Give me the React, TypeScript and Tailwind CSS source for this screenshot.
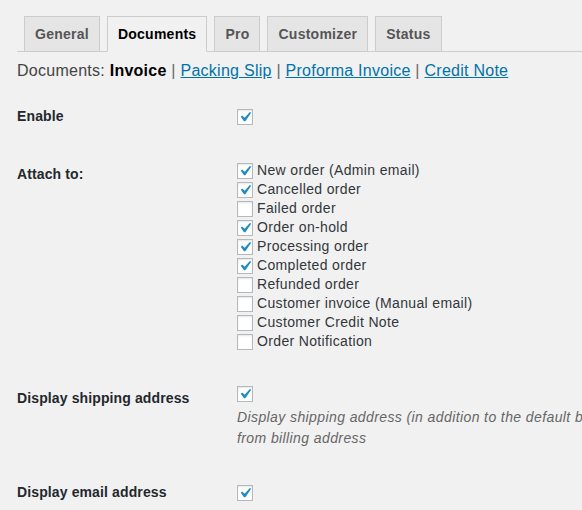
import type { ReactNode } from "react";

const tabs = ["General", "Documents", "Pro", "Customizer", "Status"];

const attachTo = [
  { label: "New order (Admin email)", checked: true },
  { label: "Cancelled order", checked: true },
  { label: "Failed order", checked: false },
  { label: "Order on-hold", checked: true },
  { label: "Processing order", checked: true },
  { label: "Completed order", checked: true },
  { label: "Refunded order", checked: false },
  { label: "Customer invoice (Manual email)", checked: false },
  { label: "Customer Credit Note", checked: false },
  { label: "Order Notification", checked: false },
];

function Checkbox({ checked }: { checked: boolean }) {
  return (
    <span className="relative block h-4 w-4 shrink-0 border border-[#b4b9be] bg-white shadow-[inset_0_1px_2px_rgba(0,0,0,0.1)]">
      {checked && (
        <svg
          viewBox="0 0 20 20"
          className="absolute left-[-3px] top-[-3px] h-5 w-5"
          fill="#1e8cbe"
        >
          <path d="M14.83 4.89l1.34.94-5.81 8.38H9.02L5.78 9.67l1.34-1.25 2.57 2.4z" />
        </svg>
      )}
    </span>
  );
}

function Row({
  label,
  thPad,
  tdPad,
  children,
}: {
  label: string;
  thPad: string;
  tdPad: string;
  children: ReactNode;
}) {
  return (
    <div className="flex">
      <div className={`w-[220px] shrink-0 text-[14px] font-bold leading-[18px] tracking-[0.12px] text-[#23282d] ${thPad}`}>
        {label}
      </div>
      <div className={tdPad}>{children}</div>
    </div>
  );
}

export default function App() {
  return (
    <div
      className="h-[510px] w-[582px] overflow-hidden bg-[#f1f1f1] pl-[17px] text-[#32373c]"
      style={{ fontFamily: '"Liberation Sans", Arial, sans-serif' }}
    >
      <div className="flex w-[600px] border-b border-[#ccc] pt-4">
        {tabs.map((t) => {
          const active = t === "Documents";
          return (
            <div
              key={t}
              className={`ml-[7px] mb-[-1px] border px-[10px] py-[5px] text-[14px] font-bold leading-6 tracking-[0.25px] ${
                active
                  ? "border-[#ccc] border-b-[#f1f1f1] bg-[#f1f1f1] text-black"
                  : "border-[#ccc] bg-[#e5e5e5] text-[#555]"
              }`}
            >
              {t}
            </div>
          );
        })}
      </div>

      <div className="mt-2 whitespace-nowrap text-[16px] leading-[22px] tracking-[0.26px] text-[#444]">
        Documents: <b className="text-black">Invoice</b> <span className="text-[#666]">|</span>{" "}
        <a href="#" className="text-[#0073aa] underline">Packing Slip</a>{" "}
        <span className="text-[#666]">|</span>{" "}
        <a href="#" className="text-[#0073aa] underline">Proforma Invoice</a>{" "}
        <span className="text-[#666]">|</span>{" "}
        <a href="#" className="text-[#0073aa] underline">Credit Note</a>
      </div>

      <Row label="Enable" thPad="pt-[25px]" tdPad="pt-[27px]">
        <Checkbox checked />
      </Row>

      <Row label="Attach to:" thPad="pt-[40px]" tdPad="pt-[36px]">
        <div className="flex flex-col">
          {attachTo.map((o) => (
            <label
              key={o.label}
              className="flex h-[19px] items-center gap-1 whitespace-nowrap text-[14px] tracking-[0.35px]"
            >
              <Checkbox checked={o.checked} />
              <span>{o.label}</span>
            </label>
          ))}
        </div>
      </Row>

      <Row label="Display shipping address" thPad="pt-[38px]" tdPad="pt-[35px]">
        <Checkbox checked />
        <p className="mt-[5px] whitespace-nowrap text-[14px] italic leading-[21px] tracking-[0.4px] text-[#666]">
          Display shipping address (in addition to the default billing address) if different
          <br />
          from billing address
        </p>
      </Row>

      <Row label="Display email address" thPad="pt-[34px]" tdPad="pt-[36px]">
        <Checkbox checked />
      </Row>
    </div>
  );
}
